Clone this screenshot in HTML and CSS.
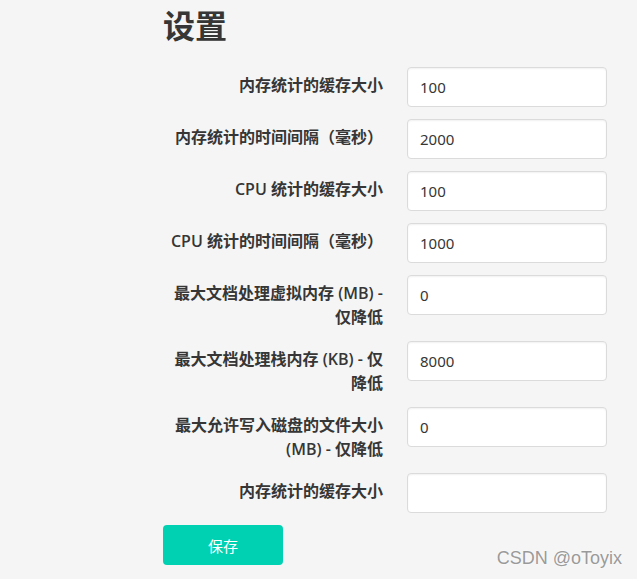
FILE: index.html
```html
<!DOCTYPE html>
<html lang="zh-CN">
<head>
<meta charset="utf-8">
<title>设置</title>
<link rel="stylesheet" href="styles.css">
</head>
<body>
<main class="page">
  <h1 class="title">设置</h1>
  <form class="form">
    <div class="field">
      <label class="label">内存统计的缓存大小</label>
      <input class="input" type="text" value="100">
    </div>
    <div class="field">
      <label class="label">内存统计的时间间隔（毫秒）</label>
      <input class="input" type="text" value="2000">
    </div>
    <div class="field">
      <label class="label">CPU 统计的缓存大小</label>
      <input class="input" type="text" value="100">
    </div>
    <div class="field">
      <label class="label">CPU 统计的时间间隔（毫秒）</label>
      <input class="input" type="text" value="1000">
    </div>
    <div class="field">
      <label class="label">最大文档处理虚拟内存 (MB) -<br>仅降低</label>
      <input class="input" type="text" value="0">
    </div>
    <div class="field">
      <label class="label">最大文档处理栈内存 (KB) - 仅<br>降低</label>
      <input class="input" type="text" value="8000">
    </div>
    <div class="field">
      <label class="label">最大允许写入磁盘的文件大小<br>(MB) - 仅降低</label>
      <input class="input" type="text" value="0">
    </div>
    <div class="field">
      <label class="label">内存统计的缓存大小</label>
      <input class="input" type="text" value="">
    </div>
    <button class="button" type="button">保存</button>
  </form>
</main>
<div class="watermark">CSDN @oToyix</div>
</body>
</html>
```

FILE: styles.css
```css
html, body {
  margin: 0;
  padding: 0;
  background: #f5f5f5;
}

body {
  font-family: "Open Sans", "Noto Sans CJK SC", sans-serif;
  color: #363636;
  width: 637px;
  height: 579px;
  overflow: hidden;
  position: relative;
}

.page {
  padding: 6px 0 0 163px;
}

.title {
  margin: 0 0 25px;
  font-size: 32px;
  line-height: 36px;
  font-weight: 700;
  color: #363636;
  font-family: "Noto Sans CJK SC", sans-serif;
}

.form {
  display: flex;
  flex-direction: column;
  gap: 12px;
}

.field {
  display: flex;
  align-items: flex-start;
  gap: 24px;
}

.label {
  width: 220px;
  flex: none;
  text-align: right;
  font-size: 16px;
  line-height: 24px;
  padding-top: 6px;
  font-weight: 600;
  color: #363636;
}

.input {
  box-sizing: border-box;
  width: 200px;
  height: 40px;
  margin: 0;
  padding: 0 12px;
  background: #fff;
  border: 1px solid #dbdbdb;
  border-radius: 4px;
  box-shadow: inset 0 1px 2px rgba(10, 10, 10, 0.06);
  font-family: "Noto Sans", "Noto Sans CJK SC", sans-serif;
  font-size: 15px;
  color: #363636;
  outline: none;
}

.button {
  width: 120px;
  height: 40px;
  margin: 0;
  padding: 0;
  border: none;
  border-radius: 4px;
  background: #00d1b2;
  color: #fff;
  font-family: "Noto Sans CJK SC", sans-serif;
  font-size: 15px;
  cursor: pointer;
}

.watermark {
  position: absolute;
  right: 15px;
  bottom: 10px;
  font-family: "Liberation Sans", Arial, sans-serif;
  font-size: 18px;
  color: #9a9a9a;
  text-shadow: 0 0 2px #fff;
}
```
